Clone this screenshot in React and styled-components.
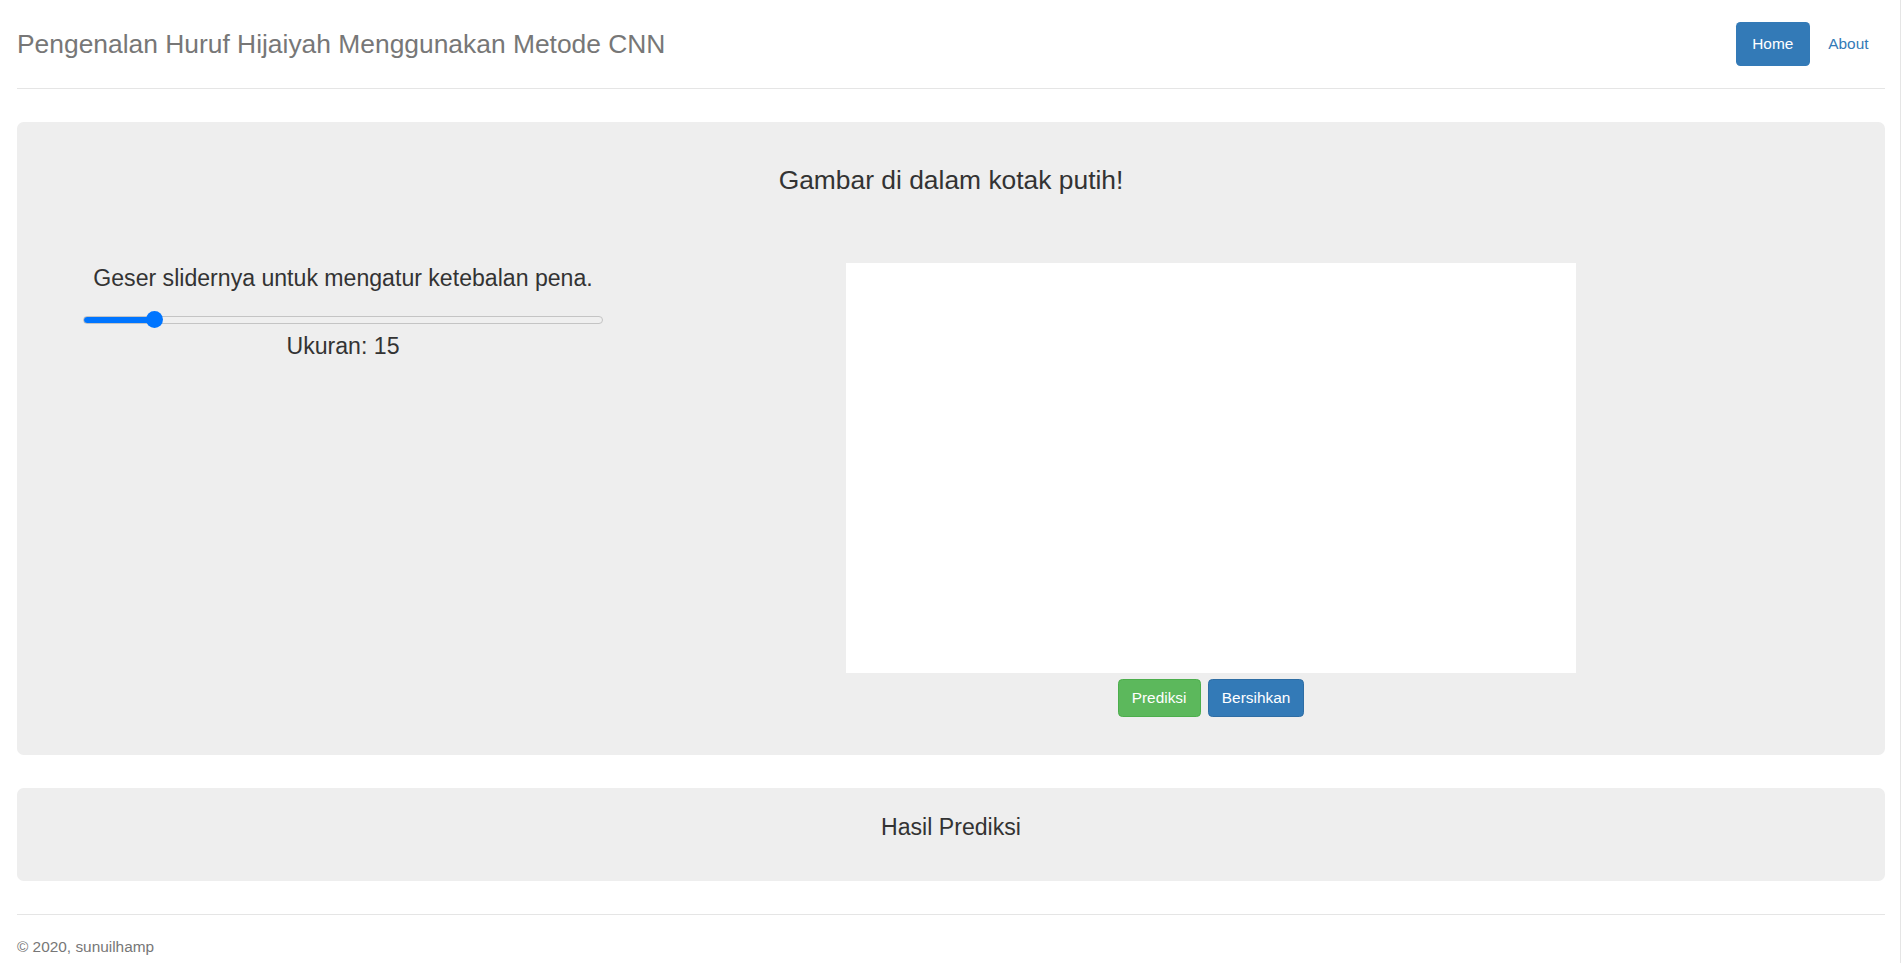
import React, { useState } from 'react'
import styled, { createGlobalStyle } from 'styled-components'

const GlobalStyle = createGlobalStyle`
  body {
    margin: 0;
    background: #fff;
    font-family: "Liberation Sans", Arial, sans-serif;
    color: #333;
  }
`;

const Page = styled.div`
  width: 1901px;
  min-height: 963px;
  box-sizing: border-box;
  border-right: 1px solid #e5e5e5;
  padding: 22px 15px 0 17px;
`;

const Header = styled.div`
  display: flex;
  justify-content: space-between;
  align-items: center;
  padding-bottom: 22px;
  border-bottom: 1px solid #e5e5e5;
`;

const Title = styled.h3`
  margin: 0;
  font-size: 26.4px;
  line-height: 44px;
  font-weight: 400;
  color: #777;
`;

const Nav = styled.nav`
  display: flex;
  gap: 2px;
`;

const Pill = styled.a`
  display: block;
  height: 44px;
  line-height: 44px;
  padding: 0 16.5px;
  border-radius: 4.4px;
  font-size: 15.4px;
  text-decoration: none;
  cursor: pointer;
  color: ${p => (p.$active ? '#fff' : '#337ab7')};
  background: ${p => (p.$active ? '#337ab7' : 'transparent')};
`;

const Jumbotron = styled.div`
  margin-top: 33px;
  background: #eee;
  border-radius: 6.6px;
  text-align: center;
  padding: ${p => p.$pad};
`;

const Heading = styled.h3`
  margin: 0;
  font-size: ${p => p.$size || '26.4px'};
  line-height: 29px;
  font-weight: 400;
  color: #333;
`;

const Row = styled.div`
  display: grid;
  grid-template-columns: 520px 1fr;
  margin-top: 68px;
`;

const LeftCol = styled.div`
  display: flex;
  flex-direction: column;
  align-items: stretch;
`;

const Lead = styled.p`
  margin: 0;
  font-size: 23.1px;
  line-height: 31px;
`;

const Slider = styled.input`
  -webkit-appearance: none;
  appearance: none;
  width: 520px;
  height: 17px;
  margin: 17px 0 0;
  background: transparent;
  cursor: pointer;

  &::-webkit-slider-runnable-track {
    height: 8px;
    border-radius: 4px;
    box-sizing: border-box;
    border: 1px solid #c4c4c4;
    background: linear-gradient(to right, #0075ff 0, #0075ff var(--fill), #efefef var(--fill));
  }
  &::-webkit-slider-thumb {
    -webkit-appearance: none;
    width: 17px;
    height: 17px;
    margin-top: -5.5px;
    border-radius: 50%;
    background: #0075ff;
    border: none;
  }
`;

const SizeLabel = styled.p`
  margin: 2px 0 0;
  font-size: 23.1px;
  line-height: 33px;
`;

const RightCol = styled.div`
  display: flex;
  flex-direction: column;
  align-items: center;
`;

const Canvas = styled.div`
  width: 730px;
  height: 410px;
  background: #fff;
`;

const Actions = styled.div`
  display: flex;
  gap: 7px;
  margin-top: 6px;
`;

const Button = styled.button`
  font-family: inherit;
  font-size: 15.4px;
  line-height: 22px;
  padding: 7px 13.2px;
  border-radius: 4.4px;
  color: #fff;
  cursor: pointer;
  background: ${p => (p.$variant === 'success' ? '#5cb85c' : '#337ab7')};
  border: 1px solid ${p => (p.$variant === 'success' ? '#4cae4c' : '#2e6da4')};
`;

const Footer = styled.footer`
  margin-top: 33px;
  padding-top: 21px;
  border-top: 1px solid #e5e5e5;
  font-size: 15.4px;
  line-height: 22px;
  color: #777;
`;

function App() {
  const [size, setSize] = useState(15)
  const min = 1
  const max = 115
  const frac = (size - min) / (max - min)
  const fill = `calc(${frac * 100}% + ${8.5 - frac * 17}px)`

  return (
    <>
      <GlobalStyle />
      <Page>
        <Header>
          <Title>Pengenalan Huruf Hijaiyah Menggunakan Metode CNN</Title>
          <Nav>
            <Pill $active>Home</Pill>
            <Pill>About</Pill>
          </Nav>
        </Header>

        <Jumbotron $pad="44px 66px 38px">
          <Heading>Gambar di dalam kotak putih!</Heading>
          <Row>
            <LeftCol>
              <Lead>Geser slidernya untuk mengatur ketebalan pena.</Lead>
              <Slider
                type="range"
                min={min}
                max={max}
                value={size}
                onChange={e => setSize(Number(e.target.value))}
                style={{ '--fill': fill }}
              />
              <SizeLabel>Ukuran: {size}</SizeLabel>
            </LeftCol>
            <RightCol>
              <Canvas />
              <Actions>
                <Button $variant="success">Prediksi</Button>
                <Button>Bersihkan</Button>
              </Actions>
            </RightCol>
          </Row>
        </Jumbotron>

        <Jumbotron $pad="25px 66px 39px">
          <Heading $size="23.1px">Hasil Prediksi</Heading>
        </Jumbotron>

        <Footer>© 2020, sunuilhamp</Footer>
      </Page>
    </>
  )
}

export default App
